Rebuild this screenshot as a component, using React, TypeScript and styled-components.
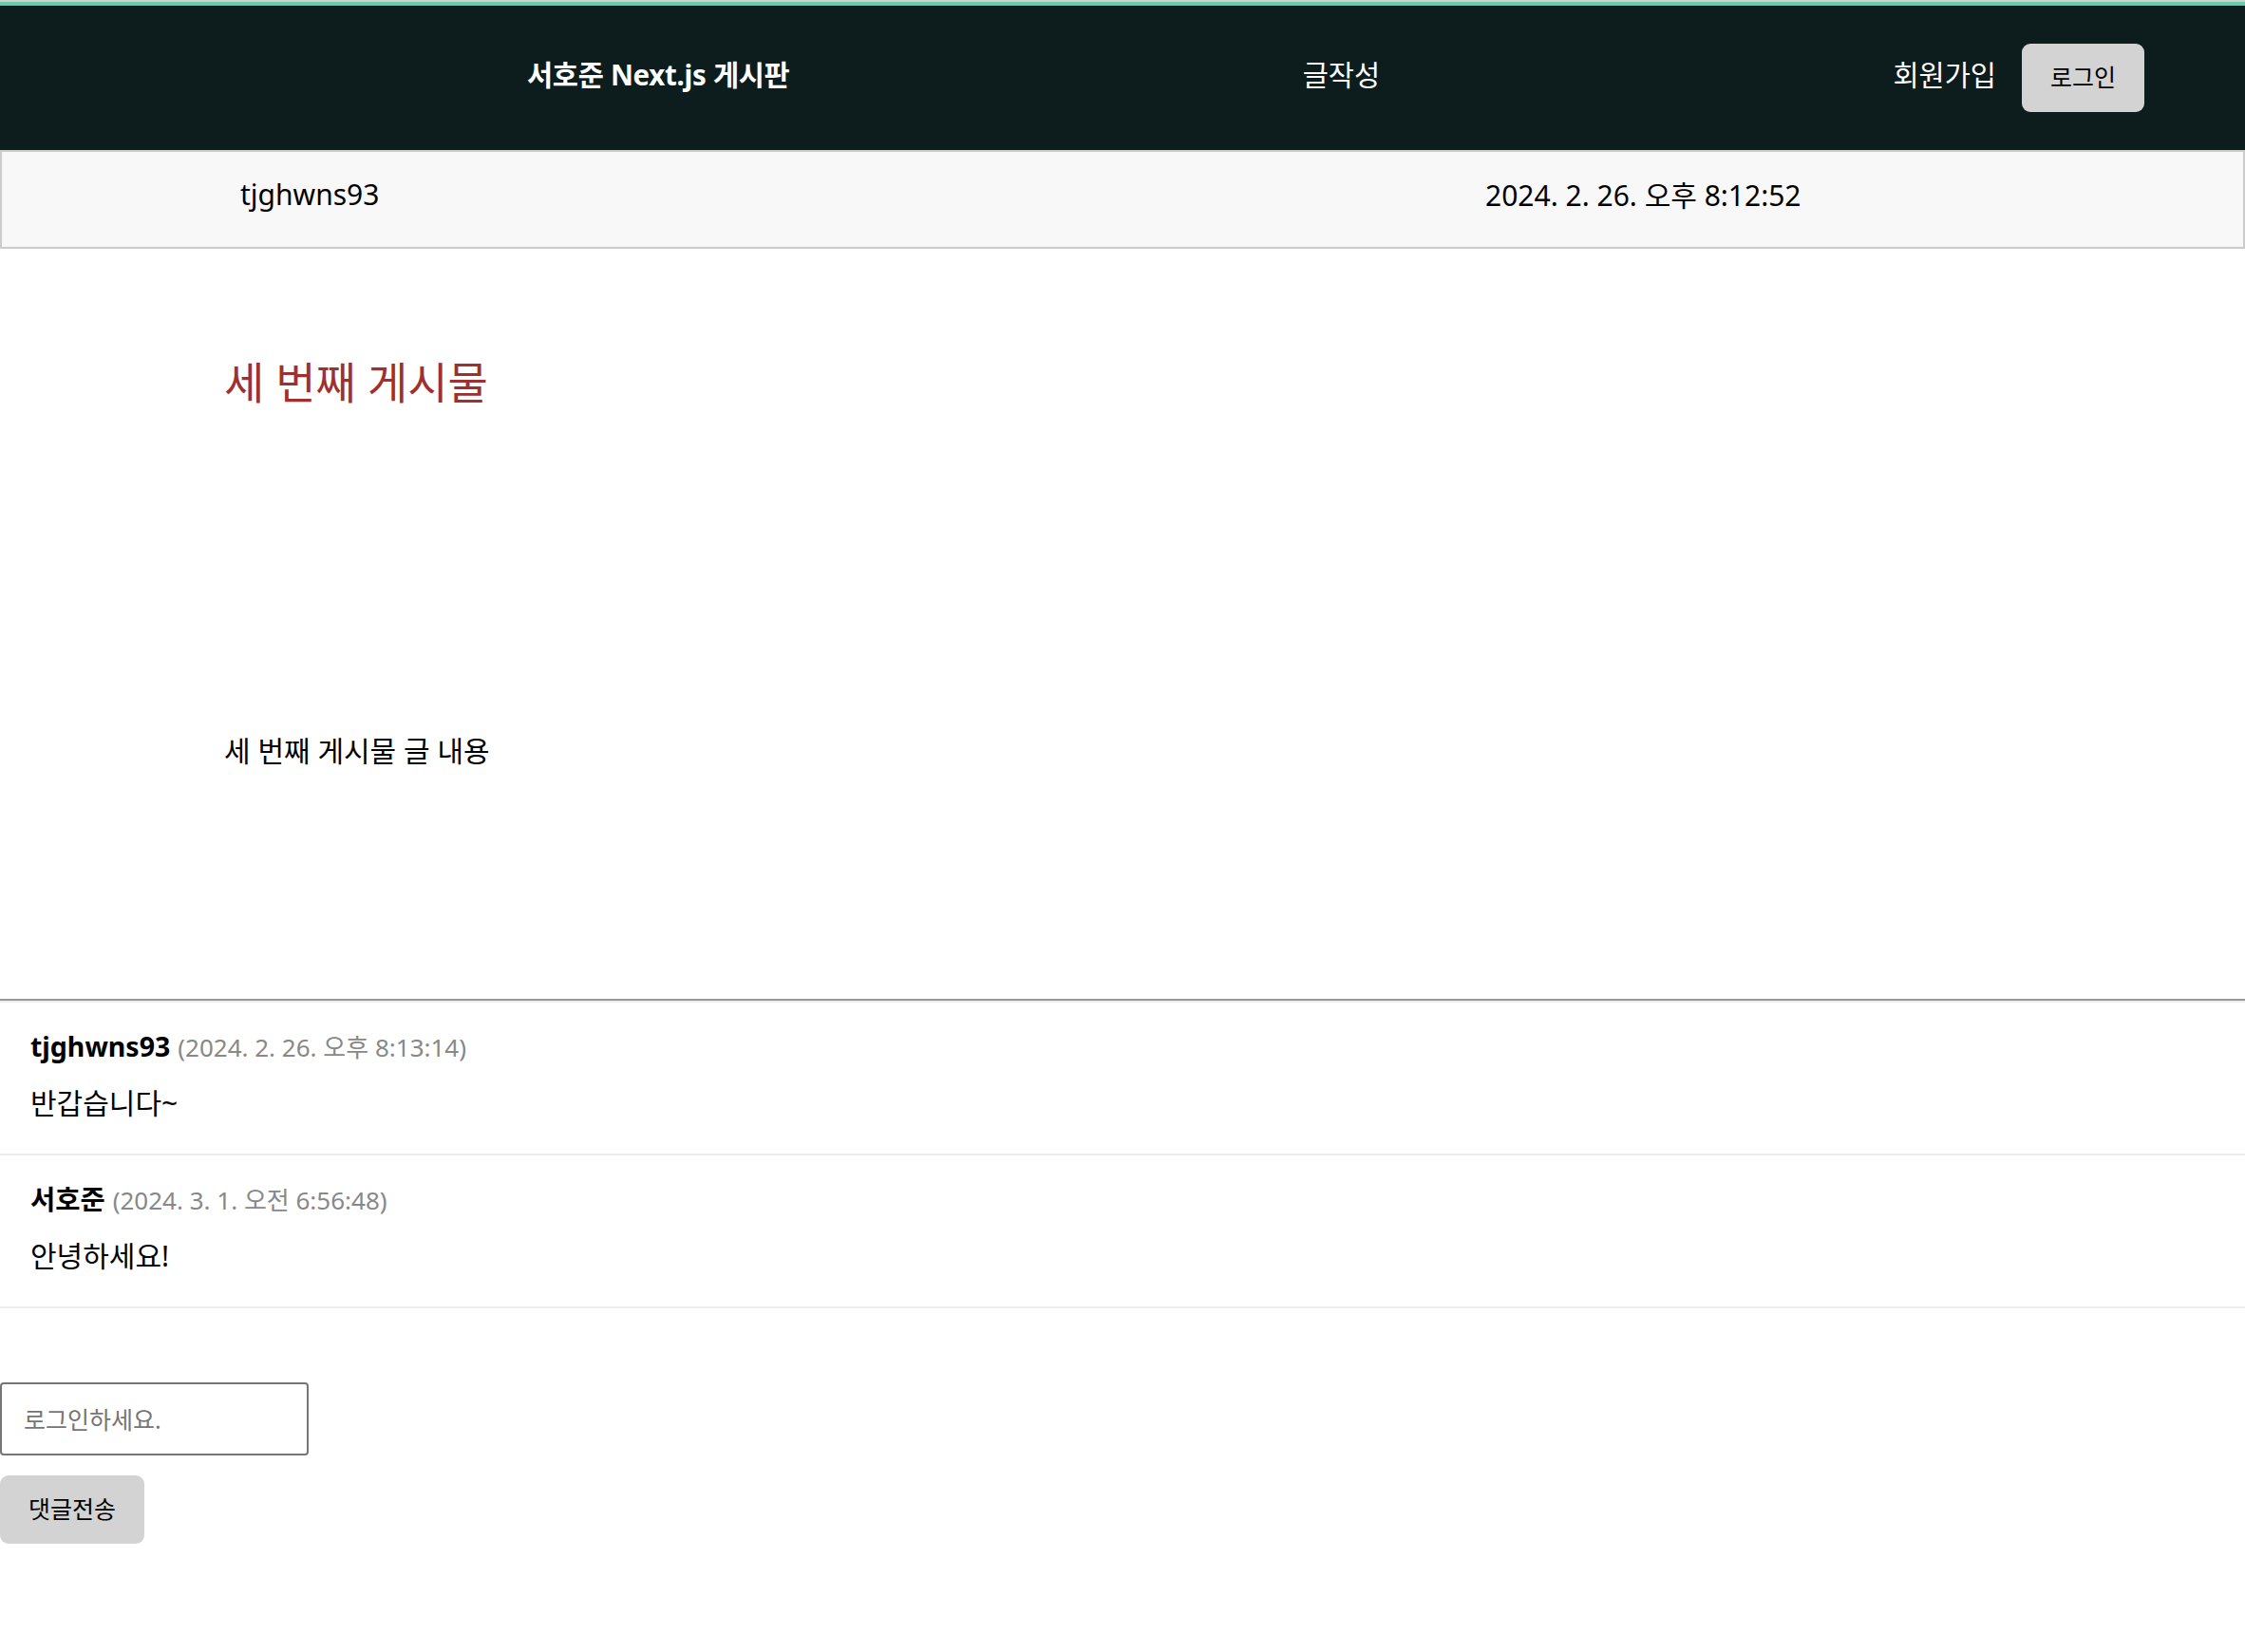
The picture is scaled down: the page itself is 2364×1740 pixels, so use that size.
import React from "react";
import styled, { createGlobalStyle } from "styled-components";

const GlobalStyle = createGlobalStyle`
  html, body {
    margin: 0;
    padding: 0;
    background: #ffffff;
  }
  body {
    font-family: "Noto Sans", "Noto Sans CJK KR", sans-serif;
    color: #000000;
  }
  * { box-sizing: border-box; }
`;

const Page = styled.div`
  border-top: 2px solid #cdd2d0;
  min-height: 1738px;
`;

const Header = styled.header`
  height: 156px;
  border-top: 4px solid #66cdaa;
  background: #0d1c1c;
  display: flex;
  align-items: center;
  justify-content: space-between;
  padding: 0 106px 0 555px;
  color: #ffffff;
`;

const Brand = styled.a`
  font-size: 29.5px;
  font-weight: 700;
  color: #ffffff;
  text-decoration: none;
  letter-spacing: -0.3px;
  padding-bottom: 9px;
`;

const NavLink = styled.a`
  font-size: 29.5px;
  color: #ffffff;
  text-decoration: none;
  padding-bottom: 9px;
`;

const NavRight = styled.div`
  display: flex;
  align-items: center;
  gap: 27px;
`;

const GrayButton = styled.button`
  height: 72px;
  padding: 0 30px 5px;
  border: none;
  border-radius: 9px;
  background: #d3d3d3;
  color: #000000;
  font-family: "Noto Sans", "Noto Sans CJK KR", sans-serif;
  font-size: 25px;
  cursor: pointer;
`;

const InfoBar = styled.div`
  height: 104px;
  border: 2px solid #cccccc;
  background: #f8f8f8;
  display: grid;
  grid-template-columns: 1311px auto;
  align-items: center;
  padding-left: 251px;
  padding-bottom: 12px;
  font-size: 30px;
`;

const Post = styled.section`
  padding: 110px 236px 0;
  height: 790px;
`;

const PostTitle = styled.h2`
  margin: 0;
  font-size: 46px;
  line-height: 60px;
  font-weight: 400;
  color: #9e3130;
`;

const PostContent = styled.p`
  margin: 339px 0 0;
  font-size: 30px;
  line-height: 40px;
`;

const Divider = styled.hr`
  margin: 0;
  height: 4px;
  border: none;
  border-top: 2px solid #999999;
  border-bottom: 2px solid #eeeeee;
`;

const CommentItem = styled.div`
  padding: 26px 32px 33px;
  border-bottom: 2px solid #eeeeee;
  display: flex;
  flex-direction: column;
  gap: 19px;
`;

const CommentHead = styled.div`
  line-height: 40px;
  display: flex;
  align-items: baseline;
  gap: 8px;
`;

const CommentAuthor = styled.strong`
  font-size: 28.5px;
  font-weight: 700;
`;

const CommentDate = styled.span`
  font-size: 26px;
  color: #888888;
`;

const CommentText = styled.div`
  font-size: 30px;
  line-height: 40px;
`;

const CommentForm = styled.form`
  display: flex;
  flex-direction: column;
  align-items: flex-start;
  gap: 21px;
  padding-top: 78px;
`;

const CommentInput = styled.input`
  width: 325px;
  height: 77px;
  border: 2px solid #767676;
  border-radius: 4px;
  padding: 0 23px;
  font-family: "Noto Sans", "Noto Sans CJK KR", sans-serif;
  font-size: 25px;
  &::placeholder {
    color: #757575;
  }
`;

const comments = [
  { author: "tjghwns93", date: "(2024. 2. 26. 오후 8:13:14)", text: "반갑습니다~" },
  { author: "서호준", date: "(2024. 3. 1. 오전 6:56:48)", text: "안녕하세요!" },
];

export default function App() {
  return (
    <>
      <GlobalStyle />
      <Page>
        <Header>
          <Brand href="#">서호준 Next.js 게시판</Brand>
          <NavLink href="#">글작성</NavLink>
          <NavRight>
            <NavLink href="#">회원가입</NavLink>
            <GrayButton type="button">로그인</GrayButton>
          </NavRight>
        </Header>
        <InfoBar>
          <span>tjghwns93</span>
          <span>2024. 2. 26. 오후 8:12:52</span>
        </InfoBar>
        <Post>
          <PostTitle>세 번째 게시물</PostTitle>
          <PostContent>세 번째 게시물 글 내용</PostContent>
        </Post>
        <Divider />
        {comments.map((c) => (
          <CommentItem key={c.date}>
            <CommentHead>
              <CommentAuthor>{c.author}</CommentAuthor>
              <CommentDate>{c.date}</CommentDate>
            </CommentHead>
            <CommentText>{c.text}</CommentText>
          </CommentItem>
        ))}
        <CommentForm onSubmit={(e) => e.preventDefault()}>
          <CommentInput placeholder="로그인하세요." />
          <GrayButton type="submit">댓글전송</GrayButton>
        </CommentForm>
      </Page>
    </>
  );
}
